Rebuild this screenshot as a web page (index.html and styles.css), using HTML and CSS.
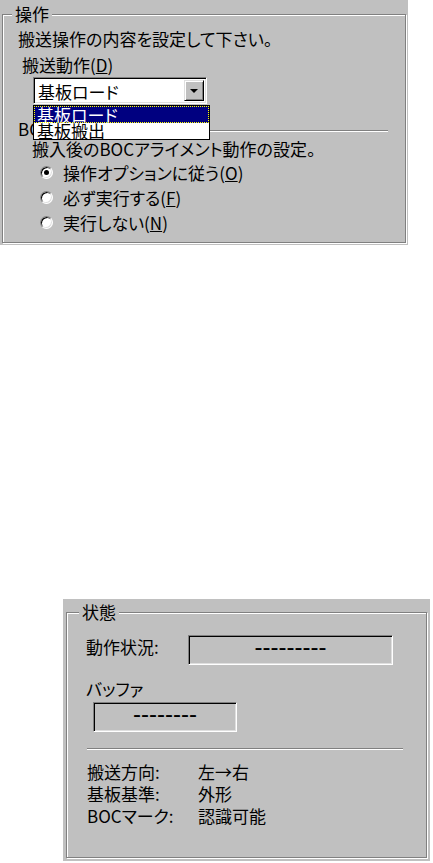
FILE: index.html
```html
<!DOCTYPE html>
<html lang="ja">
<head>
<meta charset="utf-8">
<title>搬送操作</title>
<link rel="stylesheet" href="styles.css">
</head>
<body>
<div class="panel panel-op">
  <div class="group group-op">
    <span class="legend">操作</span>
    <div class="row intro">搬送操作の内容を設定して下さい。</div>
    <div class="row field-label">搬送動作(<u>D</u>)</div>
    <div class="combo">
      <div class="combo-field sunken">
        <div class="combo-text">基板ロード</div>
        <div class="combo-btn raised"><span class="arrow"></span></div>
      </div>
      <ul class="combo-list">
        <li class="item selected">基板ロード</li>
        <li class="item">基板搬出</li>
      </ul>
    </div>
    <div class="row sep-row"><span class="sep-label">BOC</span><span class="sep-line"></span></div>
    <div class="row desc">搬入後のBOCアライメント動作の設定。</div>
    <div class="radio-row first"><span class="radio checked"></span><span>操作オプションに従う(<u>O</u>)</span></div>
    <div class="radio-row"><span class="radio"></span><span>必ず実行する(<u>F</u>)</span></div>
    <div class="radio-row"><span class="radio"></span><span>実行しない(<u>N</u>)</span></div>
  </div>
</div>

<div class="panel panel-status">
  <div class="group group-status">
    <span class="legend">状態</span>
    <div class="status-row">
      <span class="status-label">動作状況:</span>
      <div class="display sunken display-wide"><span class="dash">---------</span></div>
    </div>
    <div class="row buffer-label">バッファ</div>
    <div class="display sunken display-buffer"><span class="dash">--------</span></div>
    <div class="hsep"></div>
    <div class="info">
      <div class="info-row"><span class="info-key">搬送方向:</span><span>左→右</span></div>
      <div class="info-row"><span class="info-key">基板基準:</span><span>外形</span></div>
      <div class="info-row"><span class="info-key">BOCマーク:</span><span>認識可能</span></div>
    </div>
  </div>
</div>
</body>
</html>
```

FILE: styles.css
```css
* { box-sizing: border-box; }

html, body {
  margin: 0;
  padding: 0;
  background: #fff;
}

body {
  width: 433px;
  height: 863px;
  overflow: hidden;
  font-family: "Noto Sans CJK JP", "Noto Sans", sans-serif;
  font-size: 17px;
  font-feature-settings: "palt";
  color: #000;
}

u { text-decoration: underline; text-underline-offset: 1px; }

.panel { background: #c0c0c0; }

.panel-op {
  width: 408px;
  height: 245px;
  padding: 14px 0 0 2px;
}

.panel-status {
  width: 367px;
  height: 262px;
  margin: 354px 0 0 63px;
  padding: 13px 0 0 3px;
}

.group {
  position: relative;
  border: 1px solid #808080;
  box-shadow: inset 1px 1px 0 #fff, 1px 1px 0 #fff;
}

.group-op { width: 404px; height: 229px; }
.group-status { width: 361px; height: 246px; }

.legend {
  position: absolute;
  top: -10px;
  left: 9px;
  height: 18px;
  line-height: 18px;
  padding: 0 3px;
  background: #c0c0c0;
  white-space: nowrap;
}

.group-status .legend { left: 12px; }

.row {
  height: 20px;
  line-height: 20px;
  white-space: nowrap;
}

.intro { margin-top: 14px; padding-left: 15px; }
.field-label { margin-top: 6px; padding-left: 19px; }

/* combobox */
.combo {
  position: relative;
  width: 174px;
  height: 27px;
  margin: 2px 0 0 30px;
}

.sunken {
  border: 1px solid;
  border-color: #808080 #fff #fff #808080;
  box-shadow: inset 1px 1px 0 #000, inset -1px -1px 0 #dfdfdf;
}

.raised {
  border: 1px solid;
  border-color: #dfdfdf #000 #000 #dfdfdf;
  box-shadow: inset 1px 1px 0 #fff, inset -1px -1px 0 #808080;
  background: #c0c0c0;
}

.combo-field {
  display: flex;
  width: 100%;
  height: 100%;
  padding: 2px;
  background: #fff;
}

.combo-text {
  flex: 1;
  padding-left: 2px;
  line-height: 23px;
  white-space: nowrap;
}

.combo-btn {
  width: 20px;
  height: 100%;
  display: flex;
  align-items: center;
  justify-content: center;
}

.arrow {
  width: 0;
  height: 0;
  border-left: 4px solid transparent;
  border-right: 4px solid transparent;
  border-top: 4px solid #000;
  margin-top: 1px;
}

.combo-list {
  position: absolute;
  top: 28px;
  left: 0;
  width: 177px;
  margin: 0;
  padding: 0;
  list-style: none;
  background: #fff;
  border: 1px solid #000;
  z-index: 2;
}

.item {
  height: 16px;
  line-height: 16px;
  padding-left: 3px;
  white-space: nowrap;
}

.item.selected {
  height: 17px;
  line-height: 17px;
  background: #000080;
  color: #fff;
  outline: 1px dotted #ffff00;
  outline-offset: -1px;
}

/* BOC separator */
.sep-row {
  display: flex;
  align-items: center;
  margin-top: 15px;
  padding-left: 15px;
}

.sep-label { margin-right: 4px; }

.sep-line {
  flex: 1;
  height: 2px;
  margin: 3px 17px 0 0;
  border-top: 1px solid #808080;
  border-bottom: 1px solid #fff;
}

.desc { padding-left: 29px; }

.radio-row {
  display: flex;
  align-items: center;
  height: 25px;
  padding-left: 37px;
  white-space: nowrap;
}

.radio-row.first { margin-top: 1px; }

.radio {
  position: relative;
  flex: none;
  width: 13px;
  height: 13px;
  margin-right: 10px;
  border-radius: 50%;
  background: #fff;
  border: 1px solid;
  border-color: #808080 #fff #fff #808080;
  box-shadow: inset 1px 1px 0 #000, inset -1px -1px 0 #dfdfdf;
}

.radio.checked::after {
  content: "";
  position: absolute;
  left: 50%;
  top: 50%;
  width: 5px;
  height: 5px;
  margin: -2.5px 0 0 -2.5px;
  border-radius: 50%;
  background: #000;
}

/* status panel */
.status-row {
  display: flex;
  align-items: center;
  height: 30px;
  margin-top: 22px;
  padding-left: 19px;
}

.status-label {
  width: 102px;
  line-height: 20px;
  margin-bottom: 6px;
  white-space: nowrap;
}

.display {
  display: flex;
  align-items: center;
  justify-content: center;
  height: 30px;
  padding-bottom: 7px;
  background: #c0c0c0;
}

.display-wide { width: 205px; }

.display-buffer {
  width: 144px;
  margin: 3px 0 0 26px;
}

.dash {
  font-family: "Liberation Sans", Arial, sans-serif;
  font-size: 24px;
  line-height: 24px;
}

.buffer-label { margin-top: 14px; padding-left: 19px; }

.hsep {
  width: 316px;
  height: 2px;
  margin: 16px 0 0 20px;
  border-top: 1px solid #808080;
  border-bottom: 1px solid #fff;
}

.info { margin-top: 11px; padding-left: 20px; }

.info-row {
  display: flex;
  height: 22px;
  line-height: 22px;
  white-space: nowrap;
}

.info-key { width: 111px; }
```
